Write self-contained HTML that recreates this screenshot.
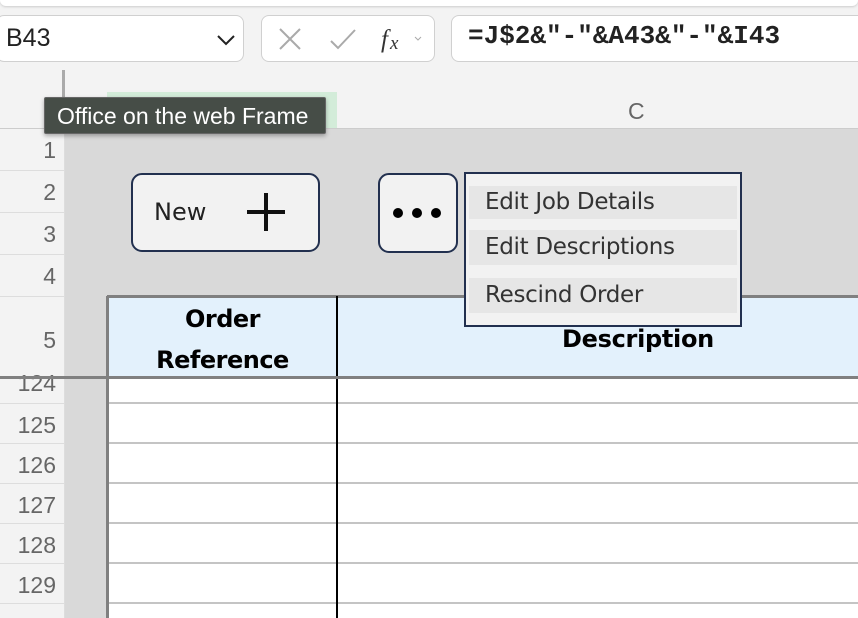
<!DOCTYPE html>
<html><head><style>
body{margin:0;width:858px;height:618px;overflow:hidden;background:#f3f3f3;font-family:"Liberation Sans",sans-serif;position:relative}
.a{position:absolute}
.rn{position:absolute;left:0;width:56px;text-align:right;color:#666;font-size:23px}
.hl{position:absolute;left:0;width:65px;height:1px;background:#ddd}
.gl{position:absolute;left:109px;width:749px;height:2px;background:#c4c4c4}
.mi{position:absolute;left:3px;width:268px;background:#e6e6e6;font-family:"DejaVu Sans",sans-serif;font-size:23px;color:#333;padding-left:16px;box-sizing:border-box;letter-spacing:-0.3px}
</style></head><body>
<div class="a" style="left:0;top:0;width:858px;height:6px;background:#fff;border-radius:0 0 8px 8px;box-shadow:0 1px 2px #ccc"></div>
<div class="a" style="left:-4px;top:15px;width:246px;height:45px;background:#fff;border:1px solid #d0d0d0;border-radius:8px"></div>
<div class="a" style="left:6px;top:24px;font-size:25px;color:#222">B43</div>
<svg class="a" style="left:215px;top:33px" width="24" height="14"><path d="M3 3 L11 11 L19 3" stroke="#222" stroke-width="2" fill="none"/></svg>
<div class="a" style="left:261px;top:15px;width:172px;height:45px;background:#fff;border:1px solid #d0d0d0;border-radius:8px"></div>
<svg class="a" style="left:275px;top:25px" width="150" height="28"><path d="M5 4 L25 24 M25 4 L5 24" stroke="#aaa" stroke-width="2"/><path d="M56 16 L63 23 L80 5" stroke="#aaa" stroke-width="2" fill="none"/><text x="106" y="22" font-family="Liberation Serif" font-style="italic" font-size="25" fill="#333">f</text><text x="115" y="24" font-family="Liberation Serif" font-style="italic" font-size="19" fill="#333">x</text><path d="M140 12 L143 15 L146 12" stroke="#aaa" fill="none"/></svg>
<div class="a" style="left:451px;top:15px;width:420px;height:45px;background:#fff;border:1px solid #d0d0d0;border-radius:8px"></div>
<div class="a" style="left:468px;top:21px;font-family:'Liberation Mono',monospace;font-size:26px;font-weight:bold;color:#222">=J$2&amp;"-"&amp;A43&amp;"-"&amp;I43</div>
<div class="a" style="left:62px;top:70px;width:3px;height:30px;background:#aaa"></div>
<div class="a" style="left:0;top:128px;width:858px;height:1px;background:#ccc"></div>
<div class="a" style="left:107px;top:92px;width:230px;height:36px;background:#d3ecd9"></div>
<div class="a" style="left:628px;top:98px;font-size:23px;color:#666">C</div>
<div class="a" style="left:65px;top:129px;width:793px;height:489px;background:#d9d9d9"></div>
<div class="hl" style="top:170px"></div><div class="hl" style="top:212px"></div><div class="hl" style="top:254px"></div><div class="hl" style="top:296px"></div>
<div class="hl" style="top:403px"></div><div class="hl" style="top:443px"></div><div class="hl" style="top:483px"></div><div class="hl" style="top:523px"></div><div class="hl" style="top:563px"></div><div class="hl" style="top:603px"></div>
<div class="a" style="left:64px;top:129px;width:1px;height:489px;background:#ddd"></div>
<div class="rn" style="top:137px">1</div><div class="rn" style="top:179px">2</div><div class="rn" style="top:221px">3</div><div class="rn" style="top:263px">4</div><div class="rn" style="top:327px">5</div>
<div class="rn" style="top:370px">124</div>
<div class="rn" style="top:412px">125</div><div class="rn" style="top:452px">126</div><div class="rn" style="top:492px">127</div><div class="rn" style="top:532px">128</div><div class="rn" style="top:572px">129</div>
<div class="a" style="left:0;top:378px;width:64px;height:24px;background:transparent"></div>
<div class="a" style="left:107px;top:296px;width:751px;height:322px;background:#fff"></div>
<div class="a" style="left:107px;top:296px;width:751px;height:81px;background:#e3f1fc"></div>
<div class="a" style="left:107px;top:295px;width:751px;height:3px;background:#808080"></div>
<div class="a" style="left:106px;top:296px;width:3px;height:322px;background:#808080"></div>
<div class="gl" style="top:402px"></div><div class="gl" style="top:442px"></div><div class="gl" style="top:482px"></div><div class="gl" style="top:522px"></div><div class="gl" style="top:562px"></div><div class="gl" style="top:602px"></div>
<div class="a" style="left:336px;top:296px;width:2px;height:322px;background:#000"></div>
<div class="a" style="left:0;top:376px;width:858px;height:3px;background:#808080"></div>
<div class="a" style="left:109px;top:299px;width:227px;text-align:center;font-family:'DejaVu Sans',sans-serif;font-weight:bold;font-size:24px;line-height:41px;color:#000;letter-spacing:-0.5px">Order<br>Reference</div>
<div class="a" style="left:338px;top:325px;width:600px;text-align:center;font-family:'DejaVu Sans',sans-serif;font-weight:bold;font-size:24px;color:#000;letter-spacing:-0.3px">Description</div>
<div class="a" style="left:131px;top:173px;width:185px;height:75px;background:#f2f2f2;border:2px solid #22304f;border-radius:11px"></div>
<div class="a" style="left:154px;top:198px;font-family:'DejaVu Sans',sans-serif;font-size:24px;color:#222">New</div>
<div class="a" style="left:247px;top:210px;width:38px;height:4px;background:#111"></div>
<div class="a" style="left:264px;top:193px;width:4px;height:38px;background:#111"></div>
<div class="a" style="left:378px;top:173px;width:76px;height:76px;background:#f2f2f2;border:2px solid #22304f;border-radius:11px"></div>
<div class="a" style="left:393px;top:208px;width:10px;height:10px;border-radius:50%;background:#000;box-shadow:19px 0 0 #000,38px 0 0 #000"></div>
<div class="a" style="left:464px;top:172px;width:274px;height:151px;background:#f2f2f2;border:2px solid #22304f">
<div class="mi" style="top:12px;height:33px;line-height:33px">Edit Job Details</div>
<div class="mi" style="top:56px;height:35px;line-height:35px">Edit Descriptions</div>
<div class="mi" style="top:104px;height:35px;line-height:35px">Rescind Order</div>
</div>
<div class="a" style="left:44px;top:97px;width:282px;height:37px;background:#464d47;border:1px solid #666;border-radius:2px;box-shadow:0 2px 4px rgba(0,0,0,.3);color:#fff;font-size:23px;line-height:37px;padding-left:12px;box-sizing:border-box;white-space:nowrap">Office on the web Frame</div>
</body></html>
